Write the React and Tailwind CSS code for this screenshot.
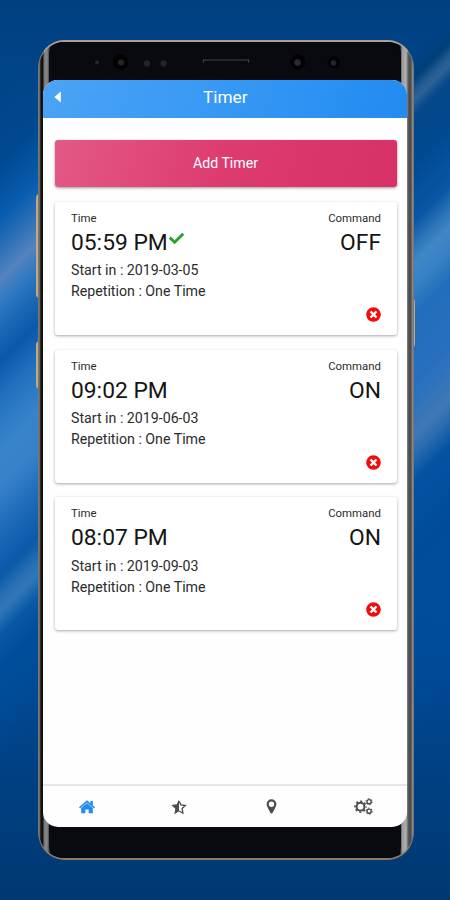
import { FaCheck, FaTimesCircle } from 'react-icons/fa'

const timers = [
  { id: 1, time: '05:59 PM', date: '2019-03-05', repeat: 'One Time', command: 'OFF', done: true },
  { id: 2, time: '09:02 PM', date: '2019-06-03', repeat: 'One Time', command: 'ON' },
  { id: 3, time: '08:07 PM', date: '2019-09-03', repeat: 'One Time', command: 'ON' },
]

function HomeIcon() {
  return (
    <svg viewBox="0 0 16 14" className="w-4 h-[14px] text-[#218bf1]" fill="currentColor">
      <path d="M8 2.900 2.200 8v5.300h4.100V9.600h3.400v3.700h4.100V8z" />
      <path d="M8 .3 0 7.200l1 1.200 7-6 7 6 1-1.200-2.200-1.900V.9h-2.400v2.300z" />
    </svg>
  )
}

function StarHalfIcon() {
  return (
    <svg viewBox="0 0 16 16" className="w-4 h-4" fill="none">
      <path d="M8 .6v11.700l-4.600 2.900.9-5.500L.4 6l5.400-.8z" fill="currentColor" />
      <path d="M8 2l1.900 3.900 4.500.6-3.300 3.100.8 4.500L8 12" stroke="currentColor" strokeWidth="1.300" />
    </svg>
  )
}

function PinIcon() {
  return (
    <svg viewBox="0 0 11 15" className="w-[11px] h-[15px]" fill="currentColor" fillRule="evenodd">
      <path d="M5.500.3A4.900 4.900 0 0 0 .6 5.200c0 1.200.4 1.900.8 2.700l2.900 5.900c.5 1 1.900 1 2.400 0l2.900-5.900c.4-.8.8-1.500.8-2.700A4.900 4.900 0 0 0 5.500.3zm0 2.200a2.700 2.700 0 1 1 0 5.400 2.700 2.700 0 0 1 0-5.400z" />
    </svg>
  )
}

function CogsIcon() {
  return (
    <svg viewBox="0 0 19 17" className="w-[19px] h-[17px]" fill="none" stroke="currentColor">
      <circle cx="6.500" cy="8.700" r="3.900" strokeWidth="2" />
      <circle cx="6.500" cy="8.700" r="5.500" strokeWidth="1.500" strokeDasharray="2.160 2.160" strokeDashoffset="1.080" />
      <circle cx="15.100" cy="3.700" r="2.100" strokeWidth="1.400" />
      <circle cx="15.100" cy="3.700" r="3.100" strokeWidth="1" strokeDasharray="1.620 1.620" />
      <circle cx="15.100" cy="13.200" r="2.100" strokeWidth="1.400" />
      <circle cx="15.100" cy="13.200" r="3.100" strokeWidth="1" strokeDasharray="1.620 1.620" />
    </svg>
  )
}

// light streaks showing on both sides of the phone
function Wallpaper() {
  return (
    <div className="absolute inset-0 overflow-hidden bg-[linear-gradient(180deg,#004080_0%,#00478d_14%,#0755a6_30%,#0b5cb0_50%,#004c9d_70%,#004286_84%,#003870_100%)]">
      <div className="absolute left-0 top-0 w-[50px] h-[900px] origin-left -skew-y-45 bg-[linear-gradient(180deg,#00458a00_100px,#00488f_160px,#0a5caf_220px,#3a77b9_262px,#5384bd_280px,#2f78c2_305px,#1866b6_335px,#0a58aa_362px,#2270bf_400px,#3884cb_450px,#3680c8_490px,#1e6bba_530px,#0a58a9_575px,#2b73b6_602px,#2f78b8_612px,#0959a8_635px,#004e9b_665px,#004c9d00_760px)]" />
      <div className="absolute right-0 top-0 w-[50px] h-[900px] origin-right -skew-y-45 bg-[linear-gradient(180deg,#00407900_20px,#003f7a_42px,#215b91_56px,#2b6397_64px,#05488b_80px,#00488f_120px,#0a56a5_185px,#2b73b6_208px,#4187c6_228px,#3780c5_250px,#226dbb_280px,#2870bf_350px,#3f78b4_400px,#286aae_420px,#0353a3_445px,#004c9a_520px,#00489300_700px)]" />
    </div>
  )
}

function Sensors() {
  return (
    <svg viewBox="0 0 375 40" className="absolute left-0 top-0 w-[375px] h-10">
      <circle cx="58" cy="20.500" r="2" fill="#25262d" />
      <circle cx="81.500" cy="20" r="7.500" fill="#020203" />
      <circle cx="82" cy="20.500" r="3" fill="#25262c" />
      <circle cx="108" cy="21.500" r="3.200" fill="#222329" />
      <circle cx="124.500" cy="21.500" r="3.200" fill="#222329" />
      <path d="M164.500 20.500v-2.500h45v2.500" fill="none" stroke="#44444a" strokeWidth="1.200" />
      <circle cx="259" cy="20" r="7.500" fill="#020203" />
      <circle cx="258.500" cy="20.500" r="3.200" fill="#2a2a30" />
      <circle cx="295" cy="20.500" r="6" fill="#020203" />
      <circle cx="294.500" cy="21" r="2.700" fill="#26272c" />
    </svg>
  )
}

function TimerCard({ timer }) {
  return (
    <div className="h-[133px] shrink-0 rounded-[3px] bg-white pl-[16.500px] pr-[15.500px] pt-[9px] shadow-[0_1px_3px_rgba(0,0,0,0.35)] flex flex-col">
      <div className="flex justify-between text-[11.400px] leading-[14px] text-[#2b2b2b]">
        <span>Time</span>
        <span>Command</span>
      </div>
      <div className="flex justify-between text-[22.800px] leading-[36px] text-[#151515]">
        <span className="flex">
          {timer.time}
          {timer.done && <FaCheck className="w-[15px] h-[15px] mt-[6.500px] ml-px text-[#28a32f]" />}
        </span>
        <span>{timer.command}</span>
      </div>
      <p className="text-[14.200px] leading-[21px] -mt-px pt-[0.500px] text-[#2b2b2b]">Start in : {timer.date}</p>
      <p className="text-[14.200px] leading-[21px] text-[#2b2b2b]">Repetition : {timer.repeat}</p>
      <FaTimesCircle className="self-end w-[15px] h-[15px] mt-[4.500px] text-[#f40c0c]" />
    </div>
  )
}

export default function App() {
  return (
    <div className="relative w-[450px] h-[900px] overflow-hidden font-[Roboto,sans-serif]">
      <Wallpaper />

      {/* side keys */}
      <div className="absolute left-[36px] top-[194px] w-1 h-[104px] rounded-l-sm bg-[#c0aa86]" />
      <div className="absolute left-[36px] top-[341px] w-1 h-[48px] rounded-l-sm bg-[#c0aa86]" />
      <div className="absolute left-[411px] top-[298px] w-1 h-[50px] rounded-r-sm bg-[#c0aa86]" />

      {/* phone body */}
      <div className="relative mx-[38px] mt-10 w-[375.500px] h-[820px] rounded-[26px/28px] border-t-2 border-b-2 border-x border-t-[#b0a094] border-b-[#8d7c66] border-x-[#777] bg-[linear-gradient(90deg,#8c8986_0,#111_2px,#111_4px,#777_5px,#8a8a8a_8px,#2a2a2a_11px,#08090d_12px,#08090d_361px,#999_363px,#b0b0b4_367px,#777_368.500px,#4a4a4a_370px,#505050_372px,#999_374px)] overflow-hidden">
        <div className="absolute left-[10px] right-[12px] top-0 bottom-0 rounded-[12px] bg-[#090a0f]" />
        <Sensors />
        <div className="relative ml-1 mt-[38px] w-[363.500px] h-[747px] rounded-[15px] overflow-hidden bg-[#fefefe] flex flex-col">
          <header className="relative h-[38px] shrink-0 flex items-center justify-center pb-[3px] pl-px text-[17.200px] text-white bg-[linear-gradient(105deg,#4ba3f5_0%,#3798f4_50%,#218bf1_100%)]">
            <svg viewBox="0 0 7 12" className="absolute left-[11px] top-[11px] w-[7px] h-3" fill="currentColor">
              <path d="M6.800.6v10.800L.4 6z" />
            </svg>
            <h1>Timer</h1>
          </header>

          <main className="flex-1 pl-[11.500px] pr-[10px] pt-[22px] flex flex-col gap-[14.800px]">
            <button className="h-[47px] shrink-0 rounded-[3px] text-[14.200px] text-white bg-[linear-gradient(105deg,#e35985_0%,#dd3b70_50%,#d83067_100%)] shadow-[0_1px_3px_rgba(0,0,0,0.4)]">
              Add Timer
            </button>
            {timers.map(t => <TimerCard key={t.id} timer={t} />)}
          </main>

          <nav className="h-[43px] shrink-0 border-t-2 border-[#e6e6e6] -ml-0.5 -mr-[3px] grid grid-cols-4 items-center justify-items-center text-[#4d4d4d]">
            <HomeIcon />
            <StarHalfIcon />
            <PinIcon />
            <CogsIcon />
          </nav>
        </div>
      </div>
    </div>
  )
}
